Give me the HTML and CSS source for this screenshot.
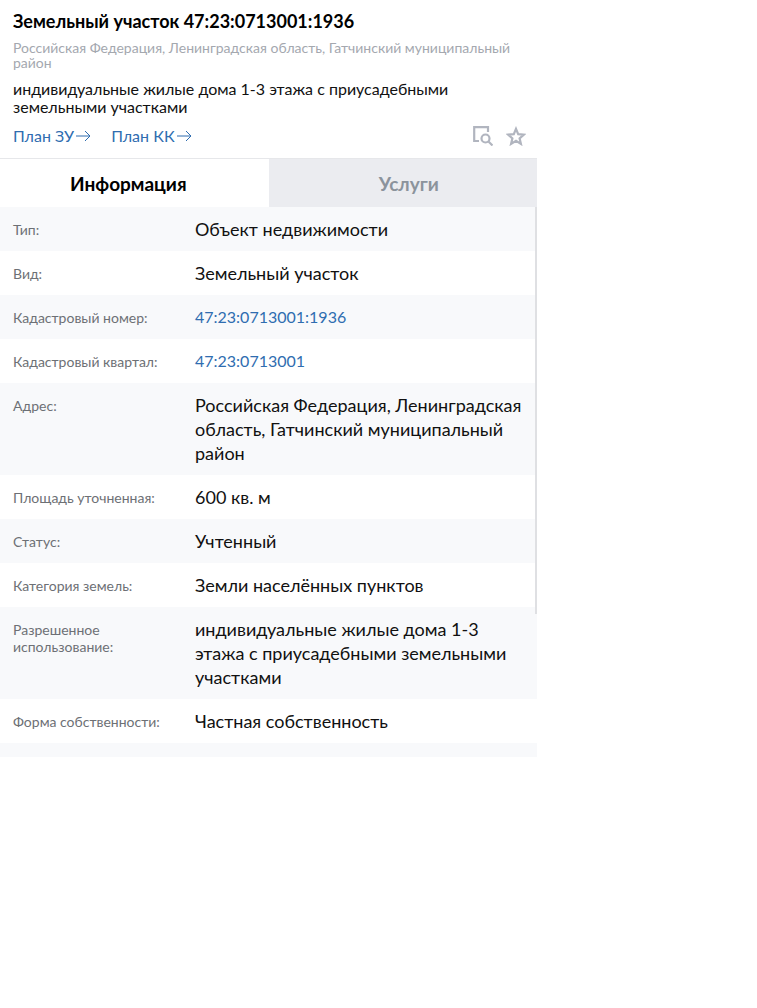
FILE: index.html
```html
<!DOCTYPE html>
<html lang="ru">
  <head>
    <meta charset="utf-8">
    <title>Земельный участок 47:23:0713001:1936</title>
    <link rel="stylesheet" href="styles.css">
  </head>
  <body>

    <main class="panel">

      <header class="header">
        <h1 class="title">Земельный участок 47:23:0713001:1936</h1>
        <p class="address">Российская Федерация, Ленинградская область, Гатчинский муниципальный район</p>
        <p class="usage">индивидуальные жилые дома 1-3 этажа с приусадебными земельными участками</p>

        <div class="actions">
          <a class="plan" href="#zu">План ЗУ
            <svg width="15" height="12" viewBox="0 0 15 12"><path d="M0 6h14M9 1l5 5-5 5"/></svg>
          </a>
          <a class="plan" href="#kk">План КК
            <svg width="15" height="12" viewBox="0 0 15 12"><path d="M0 6h14M9 1l5 5-5 5"/></svg>
          </a>
          <div class="tools">
            <button class="tool" aria-label="Найти на карте">
              <svg width="20" height="20" viewBox="0 0 20 20">
                <path d="M15 6V1.200H1.200V15H6"/>
                <circle cx="12.500" cy="12.500" r="4"/>
                <path d="M15.500 15.500l4 4"/>
              </svg>
            </button>
            <button class="tool" aria-label="В избранное">
              <svg width="20" height="20" viewBox="0 0 20 20">
                <path d="M10 2.800l2.200 5.300 5.700.5-4.300 3.700 1.300 5.600-4.900-3-4.900 3 1.300-5.600L2.100 8.600l5.700-.5z"/>
              </svg>
            </button>
          </div>
        </div>
      </header>

      <nav class="tabs">
        <button class="tab active">Информация</button>
        <button class="tab">Услуги</button>
      </nav>

      <div class="content">
        <table class="info">
          <tr><th>Тип:</th><td>Объект недвижимости</td></tr>
          <tr><th>Вид:</th><td>Земельный участок</td></tr>
          <tr><th>Кадастровый номер:</th><td><a href="#number">47:23:0713001:1936</a></td></tr>
          <tr><th>Кадастровый квартал:</th><td><a href="#quarter">47:23:0713001</a></td></tr>
          <tr><th>Адрес:</th><td>Российская Федерация, Ленинградская область, Гатчинский муниципальный район</td></tr>
          <tr><th>Площадь уточненная:</th><td>600 кв. м</td></tr>
          <tr><th>Статус:</th><td>Учтенный</td></tr>
          <tr><th>Категория земель:</th><td>Земли населённых пунктов</td></tr>
          <tr><th>Разрешенное использование:</th><td>индивидуальные жилые дома 1-3 этажа с приусадебными земельными участками</td></tr>
          <tr><th>Форма собственности:</th><td>Частная собственность</td></tr>
        </table>
        <div class="next-row"></div>
        <div class="scrollbar"></div>
      </div>

    </main>

  </body>
</html>
```
FILE: styles.css
```css
* {
  box-sizing: border-box;
}

body {
  margin: 0;
  font-family: Lato, "Noto Sans", sans-serif;
  background-color: #fff;
  color: #111;
}

.panel {
  width: 100%;
  max-width: 537px;
}

a {
  color: #2f6db0;
  text-decoration: none;
}

button {
  border: none;
  padding: 0;
  font-family: inherit;
  cursor: pointer;
}

/* Header */

.header {
  padding: 9px 11px 12px 13px;
}

.title {
  margin: 0 0 7px;
  font-size: 18px;
  line-height: 24px;
  color: #000;
}

.address {
  margin: 0 0 10px;
  font-size: 14px;
  line-height: 15px;
  color: #a4a8af;
}

.usage {
  margin: 0 60px 10px 0;
  font-size: 16px;
  line-height: 18px;
}

.actions {
  display: flex;
  gap: 20px;
  height: 20px;
}

.plan {
  display: flex;
  align-items: center;
  gap: 2px;
  font-size: 16px;
  line-height: 20px;
}

.tools {
  display: flex;
  gap: 13px;
  margin-left: auto;
}

.tool {
  background: none;
}

svg {
  display: block;
  fill: none;
  stroke: currentColor;
}

.tool svg {
  color: #b1b5bf;
  stroke-width: 2.2;
}

/* Tabs */

.tabs {
  display: flex;
  border-top: 1px solid #e6e7ea;
}

.tab {
  flex: 1;
  height: 48px;
  padding-left: 12px;
  font-size: 19px;
  font-weight: bold;
  background-color: #ebecf0;
  color: #8b939c;
}

.tab.active {
  padding: 0 12px 0 0;
  background-color: #fff;
  color: #000;
}

/* Info */

.content {
  position: relative;
}

.info {
  width: 100%;
  border-collapse: collapse;
}

.info tr:nth-child(odd),
.next-row {
  background-color: #f8f9fb;
}

.info th {
  width: 195px;
  padding: 14px 30px 10px 13px;
  font-size: 14px;
  font-weight: normal;
  line-height: 17px;
  text-align: left;
  vertical-align: top;
  color: #6d7075;
}

.info td {
  padding: 10px 5px 10px 0;
  font-size: 18px;
  line-height: 24px;
  vertical-align: top;
}

.info a {
  display: block;
  font-size: 16px;
}

.next-row {
  height: 14px;
}

.scrollbar {
  position: absolute;
  top: 0;
  right: 0;
  width: 2px;
  height: 74%;
  background-color: #dfe0e3;
}
```
